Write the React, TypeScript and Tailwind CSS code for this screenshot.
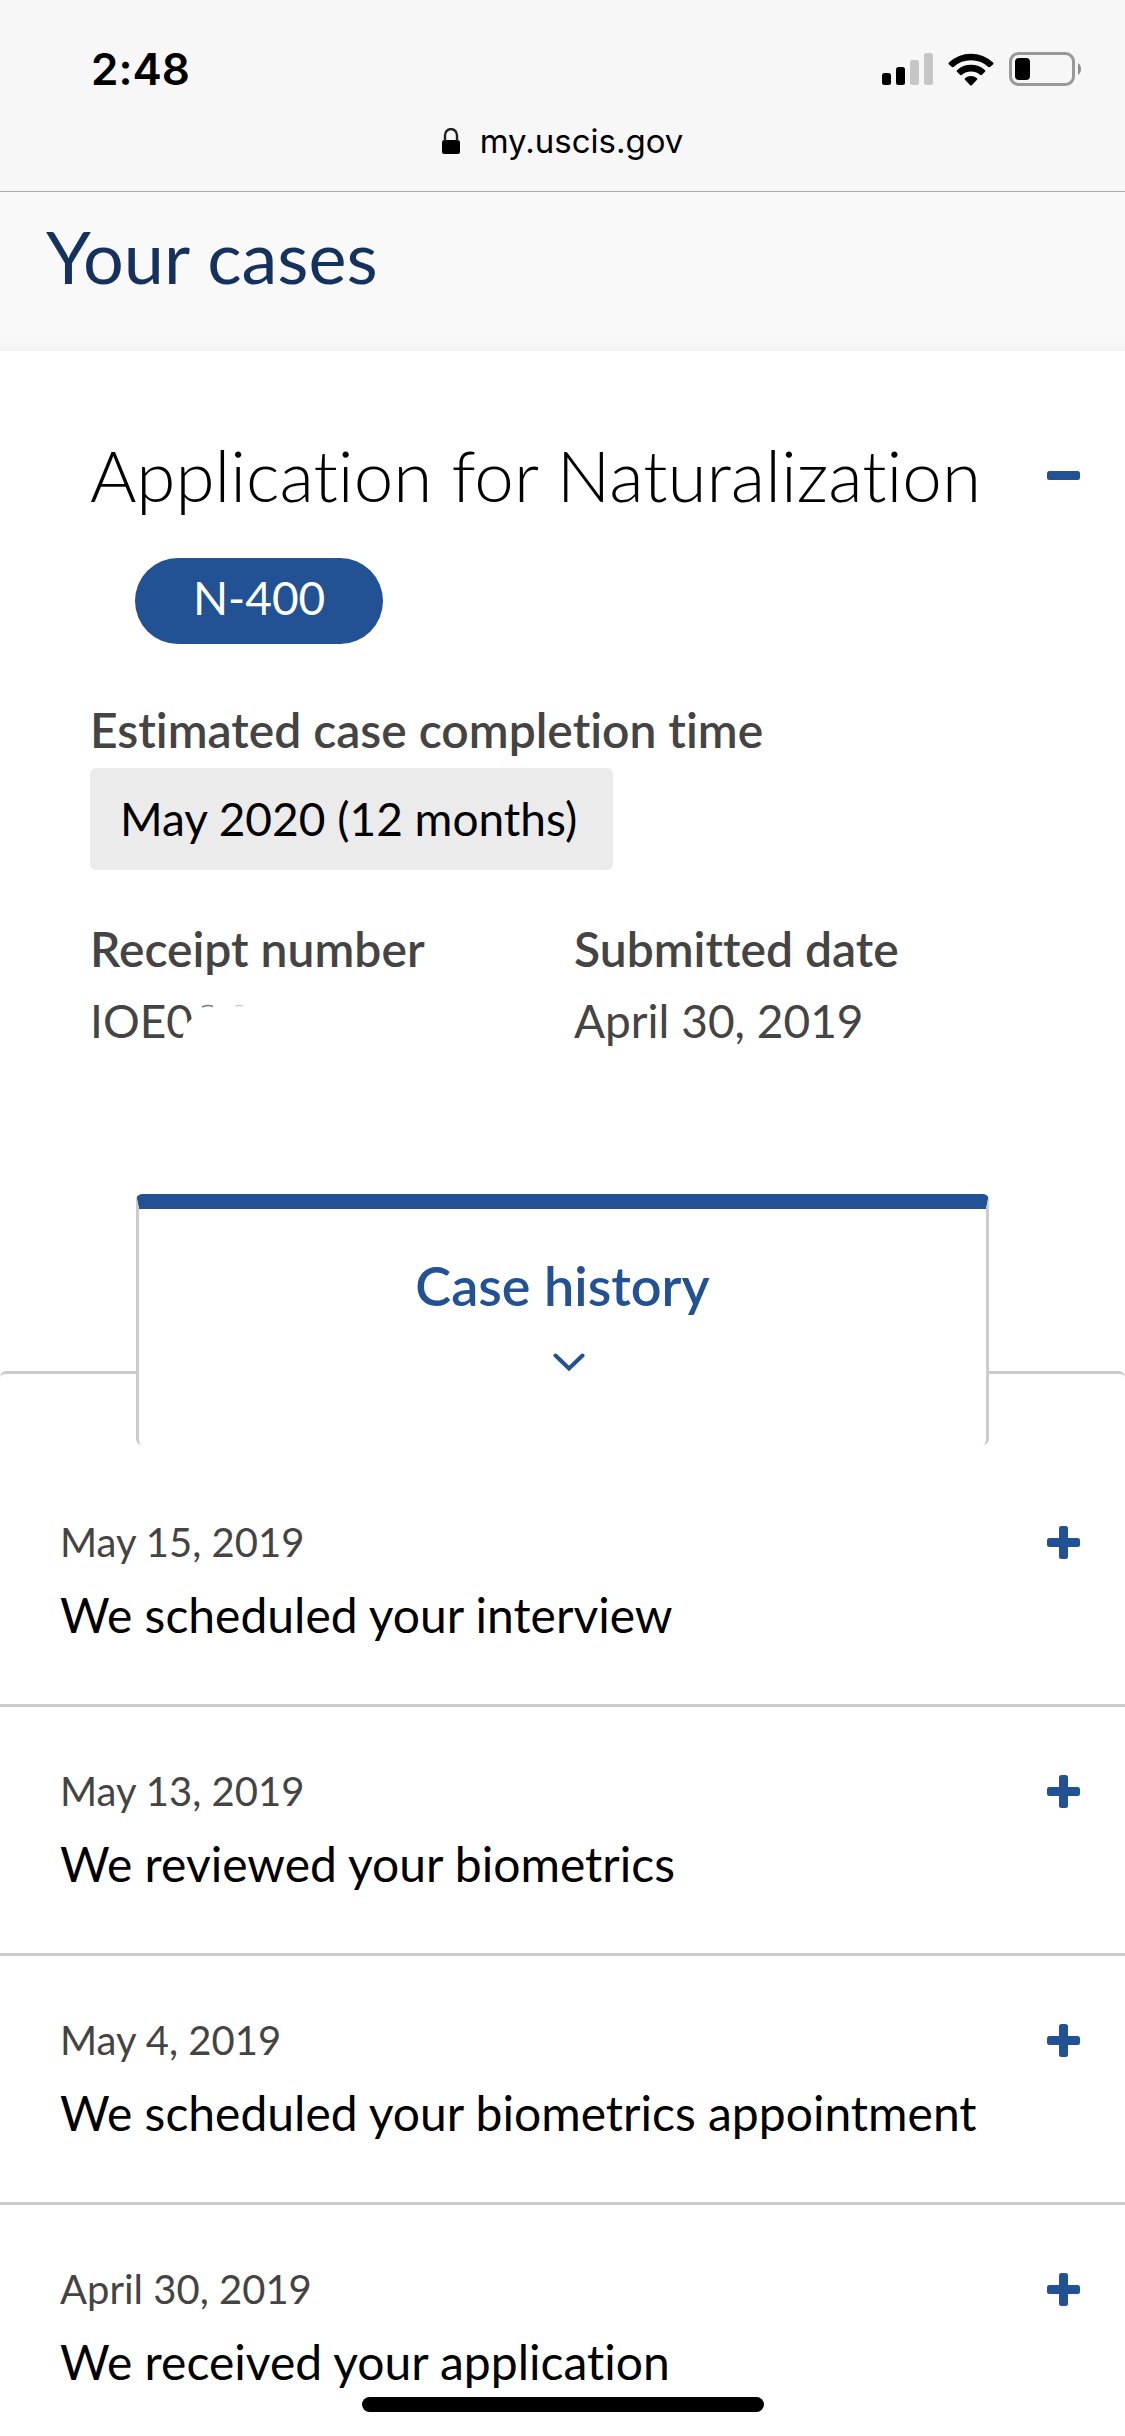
const history = [
  { date: "May 15, 2019", title: "We scheduled your interview" },
  { date: "May 13, 2019", title: "We reviewed your biometrics" },
  { date: "May 4, 2019", title: "We scheduled your biometrics appointment" },
  { date: "April 30, 2019", title: "We received your application" },
];

function SignalIcon() {
  return (
    <svg width="51" height="32" viewBox="0 0 51 32" aria-hidden="true">
      <rect x="0" y="20" width="9" height="12" rx="2.5" fill="#000" />
      <rect x="14" y="14" width="9" height="18" rx="2.5" fill="#000" />
      <rect x="28" y="7" width="9" height="25" rx="2.5" fill="#c6c6c6" />
      <rect x="42" y="0" width="9" height="32" rx="2.5" fill="#c6c6c6" />
    </svg>
  );
}

function WifiIcon() {
  return (
    <svg width="46" height="33" viewBox="0 0 46 33" aria-hidden="true">
      <path d="M1 9.5 Q0 10.5 1 11.5 L4 14 Q5 14.6 6 13.8 A25 25 0 0 1 40 13.8 Q41 14.6 42 14 L45 11.5 Q46 10.5 45 9.5 A32 32 0 0 0 1 9.5Z" />
      <path d="M9 17.2 Q8.2 18 9 18.8 L12 21.8 Q13 22.6 14 21.8 A14 14 0 0 1 32 21.8 Q33 22.6 34 21.8 L37 18.8 Q37.8 18 37 17.2 A21 21 0 0 0 9 17.2Z" />
      <path d="M17 25.2 Q16.2 26 17 26.8 L22.2 32.2 Q23 33 23.8 32.2 L29 26.8 Q29.8 26 29 25.2 A9.5 9.5 0 0 0 17 25.2Z" />
    </svg>
  );
}

function BatteryIcon() {
  return (
    <svg width="74" height="34" viewBox="0 0 74 34" aria-hidden="true">
      <rect x="1.5" y="1.5" width="63" height="31" rx="8" fill="none" stroke="#999" strokeWidth="3" />
      <rect x="6" y="6" width="15" height="22" rx="4" fill="#000" />
      <path d="M69 11 A7.5 7.5 0 0 1 69 23Z" fill="#8c8c8c" />
    </svg>
  );
}

function LockIcon() {
  return (
    <svg width="18" height="26" viewBox="0 0 18 26" aria-hidden="true">
      <rect x="0" y="12" width="18" height="14" rx="2.5" />
      <path d="M3 13 V7.5 A6 6.5 0 0 1 15 7.5 V13" fill="none" stroke="#222" strokeWidth="2.4" />
    </svg>
  );
}

function PlusIcon() {
  return (
    <svg className="shrink-0" width="33" height="33" viewBox="0 0 33 33" fill="#225293" aria-hidden="true">
      <rect x="0" y="12" width="33" height="9" rx="2.5" />
      <rect x="12" y="0" width="9" height="33" rx="2.5" />
    </svg>
  );
}

function MinusIcon() {
  return (
    <svg width="33" height="9" viewBox="0 0 33 9" fill="#225293" aria-hidden="true">
      <rect width="33" height="9" rx="2.5" />
    </svg>
  );
}

/* White smudge that hides the rest of the receipt number. */
function Redaction() {
  return (
    <svg className="absolute top-0 left-[78px]" width="120" height="60" viewBox="0 0 120 60" aria-hidden="true">
      <path d="M26 27 Q16 30 14 52 L120 52 V16 L26 16Z" fill="#fff" />
      <path d="M34 16 Q40 13.5 45 15.5" fill="none" stroke="#777" strokeWidth="1.5" />
      <path d="M67 15 Q71 14 75 15" fill="none" stroke="#bbb" strokeWidth="1" />
    </svg>
  );
}

export default function App() {
  return (
    <div className="min-h-screen bg-white font-[Lato,sans-serif] text-black [font-variant-ligatures:none]">
      <header className="border-b border-[#acacac] bg-[#f7f7f7] pt-[41px] pb-[26px] font-[Inter,sans-serif]">
        <div className="flex items-center justify-between pr-[42px] pl-[91px]">
          <time className="text-[44px] leading-[56px] font-semibold">2:48</time>
          <div className="flex items-center gap-[15px]">
            <SignalIcon />
            <WifiIcon />
            <BatteryIcon />
          </div>
        </div>
        <div className="mt-5 flex items-center justify-center gap-5">
          <LockIcon />
          <span className="text-[33px] leading-[48px]">my.uscis.gov</span>
        </div>
      </header>

      <main>
        <div className="bg-[#f9f9f9] px-[46px] pt-6 pb-[55px] shadow-[inset_0_-12px_10px_-10px_#ececec]">
          <h1 className="text-[72px] leading-[80px] text-[#15325f]">Your cases</h1>
        </div>

        <section className="pt-[84px] pr-[45px] pb-[320px] pl-[90px]">
          <div className="flex items-center justify-between">
            <h2 className="text-[71px] leading-[80px] font-light">Application for Naturalization</h2>
            <button type="button" aria-label="Collapse case" className="flex h-[33px] items-center">
              <MinusIcon />
            </button>
          </div>
          <span className="mt-[43px] ml-[45px] block w-fit rounded-full bg-[#225293] px-[58px] pb-[6px] text-[46px] leading-[80px] text-white">
            N-400
          </span>
          <dl className="text-[46px] leading-[60px] text-[#444]">
            <div className="mt-14">
              <dt className="text-[48px] font-semibold">Estimated case completion time</dt>
              <dd className="mt-2 w-fit rounded-md bg-[#ebebeb] py-[21px] pr-[36px] pl-[30px] text-black">May 2020 (12 months)</dd>
            </div>
            <div className="mt-[49px] grid grid-cols-2 pr-[22px]">
              <div>
                <dt className="text-[48px] font-semibold">Receipt number</dt>
                <dd className="relative mt-3">
                  IOE0
                  <Redaction />
                </dd>
              </div>
              <div>
                <dt className="text-[48px] font-semibold">Submitted date</dt>
                <dd className="mt-3">April 30, 2019</dd>
              </div>
            </div>
          </dl>
        </section>

        <section className="rounded-t-md border-t-[3px] border-[#ccc]">
          <div className="-mt-[180px] px-[136px]">
            <button
              type="button"
              className="flex w-full flex-col items-center rounded-md border-x-[3px] border-t-[15px] border-x-[#ccc] border-t-[#225293] bg-white pt-[47px] pb-[74px] text-[#225293]"
            >
              <span className="text-[54px] leading-[60px] font-semibold">Case history</span>
              <svg className="mt-[37px] ml-3" width="32" height="18" viewBox="0 0 32 18" fill="none" aria-hidden="true">
                <path d="M2.5 2.5 L16 15.5 L29.5 2.5" stroke="#225293" strokeWidth="4" strokeLinecap="round" />
              </svg>
            </button>
          </div>
          <ul className="mt-[13px]">
            {history.map((item) => (
              <li key={item.date} className="border-b-[3px] border-[#ccc] pb-[59px] last:border-b-0 last:pb-11">
                <button type="button" className="flex w-full items-start justify-between pt-[60px] pr-[45px] pl-[60px] text-left">
                  <span className="flex flex-col">
                    <span className="text-[40px] leading-[48px] text-[#444]">{item.date}</span>
                    <span className="mt-[19px] text-[48px] leading-[60px]">{item.title}</span>
                  </span>
                  <span className="flex h-12 items-center">
                    <PlusIcon />
                  </span>
                </button>
              </li>
            ))}
          </ul>
        </section>
      </main>

      <div className="fixed inset-x-0 bottom-6 mx-auto h-[15px] w-[402px] rounded-full bg-black" />
    </div>
  );
}
